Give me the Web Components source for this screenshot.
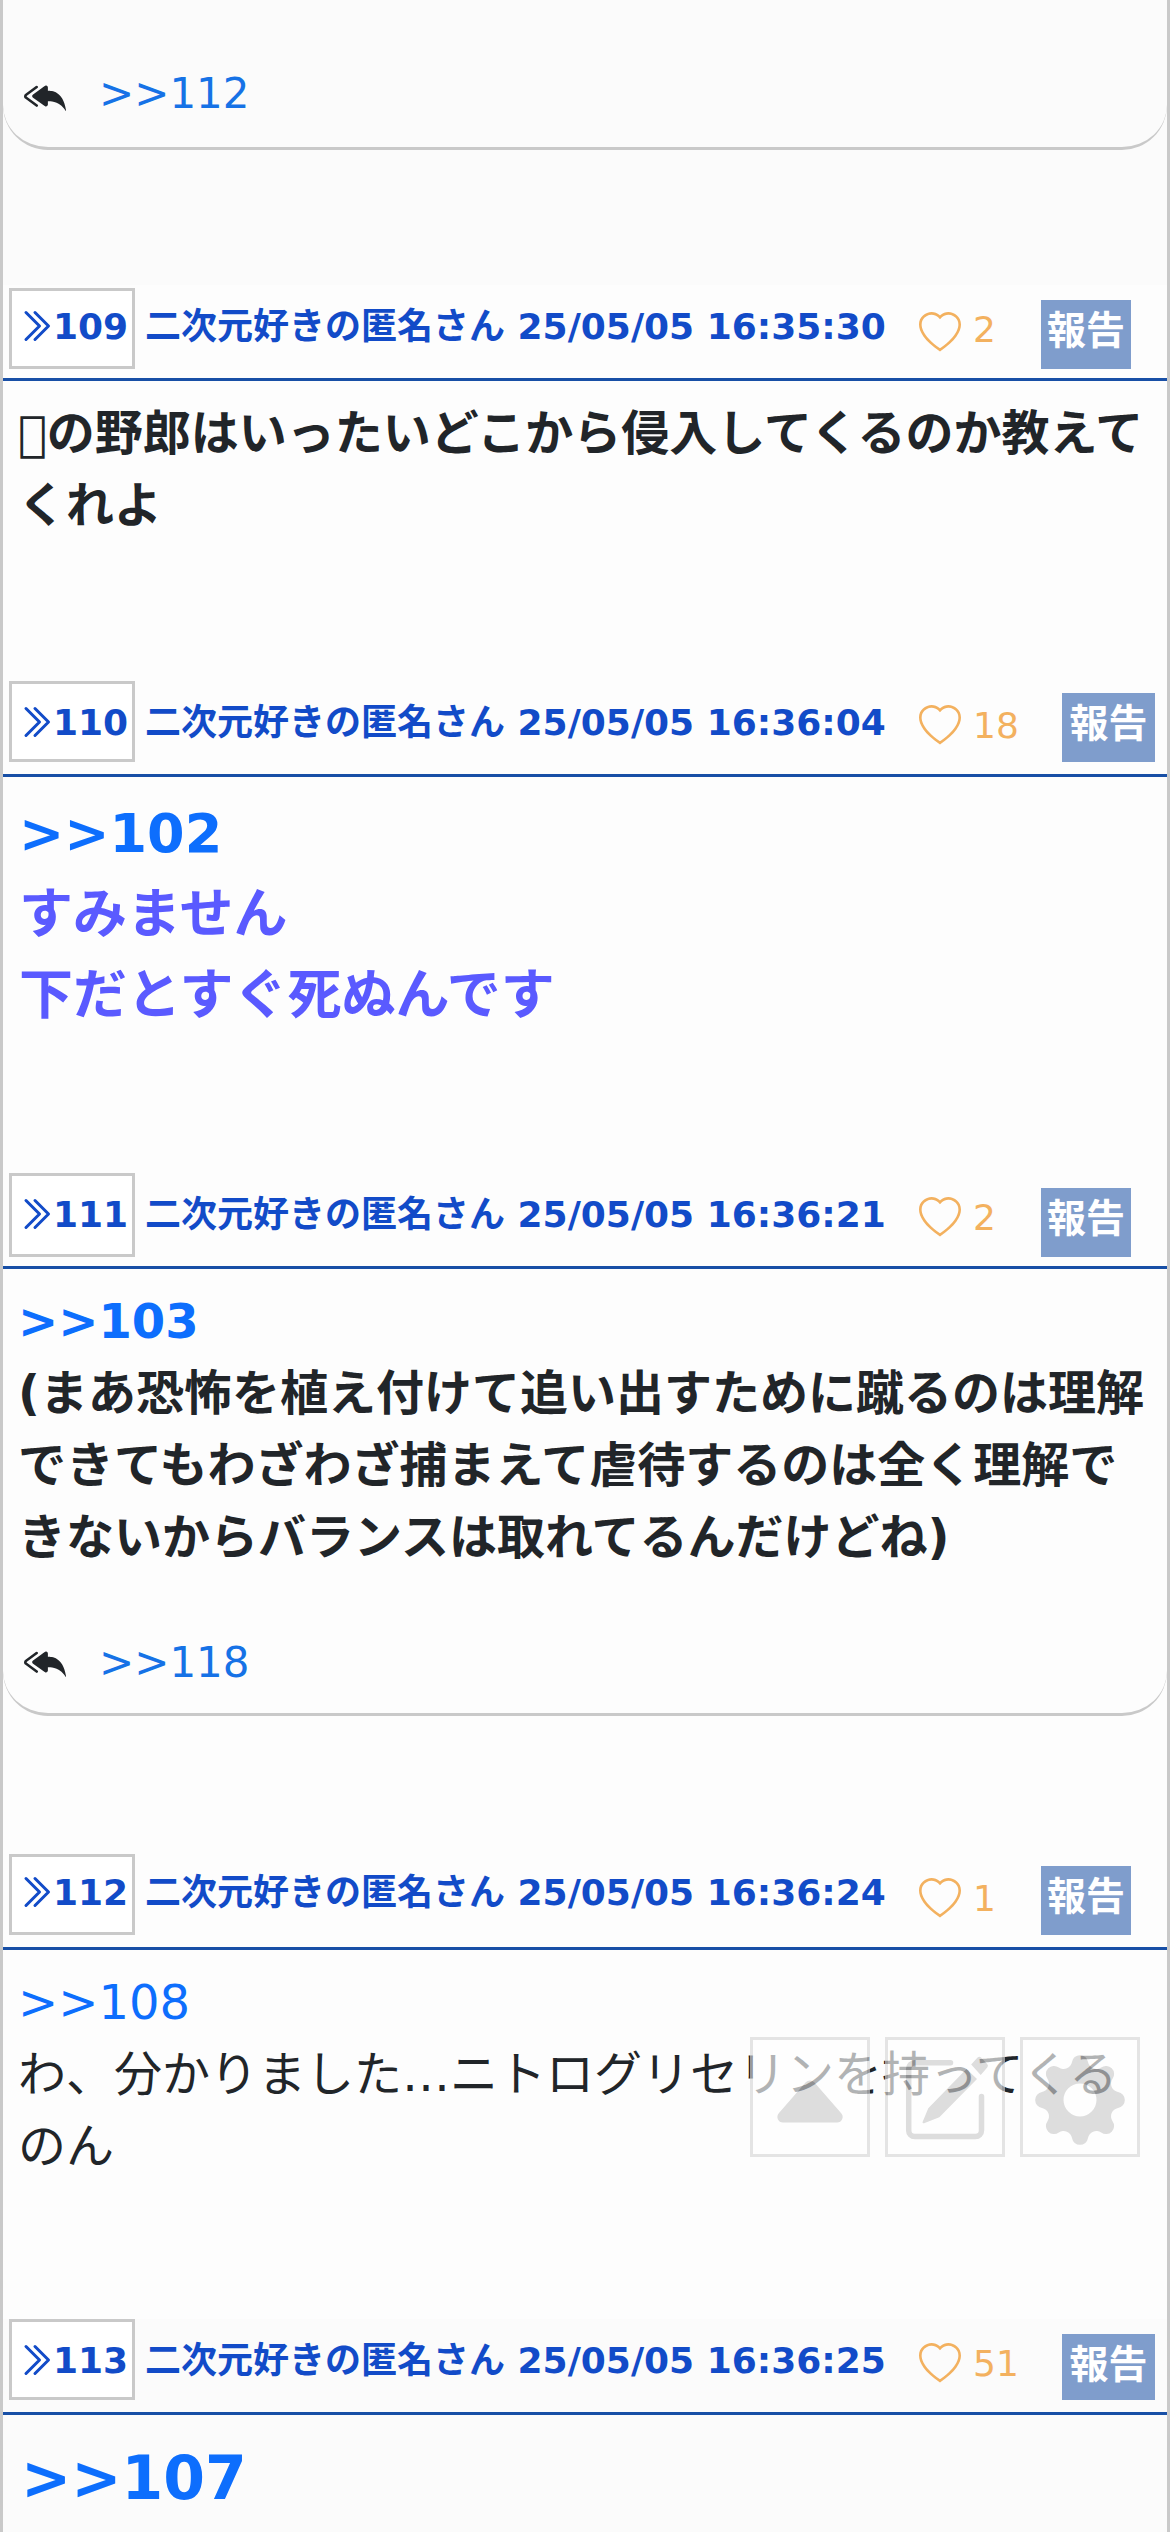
<!DOCTYPE html>
<html lang="ja">
<head>
<meta charset="utf-8">
<title>スレッド</title>
<style>
html,body{margin:0;padding:0}
body{width:1170px;height:2532px;overflow:hidden;background:#fdfdfd;color:#212529;font-family:"DejaVu Sans","Noto Sans CJK JP",sans-serif;font-size:48px;line-height:72px}
</style>
</head>
<body>
<board-thread>
  <thread-post style="--bg:#fbfbfb;--h:285px" replies="112" headless></thread-post>
  <thread-post no="109" time="25/05/05 16:35:30" likes="2" style="--h:396px;--box-y:3px;--heart-y:27px;--pad:16px"><div>&#x10F123;の野郎はいったいどこから侵入してくるのか教えてくれよ</div></thread-post>
  <thread-post no="110" time="25/05/05 16:36:04" likes="18" wide style="--h:492px;--report-y:12px;--lh:81px;--size:54px;--color:#5a5aff;--pad:16px;--x:16px"><post-anchor>102</post-anchor><div>すみません<br>下だとすぐ死ぬんです</div></thread-post>
  <thread-post no="111" time="25/05/05 16:36:21" likes="2" replies="118" style="--h:681px;--box-h:84px;--pad:16px;--reply-y:3px"><post-anchor>103</post-anchor><div>(まあ恐怖を植え付けて追い出すために蹴るのは理解できてもわざわざ捕まえて虐待するのは全く理解できないからバランスは取れてるんだけどね)</div></thread-post>
  <thread-post no="112" time="25/05/05 16:36:24" likes="1" style="--h:465px;--report-y:12px;--text-y:18px;--weight:400;--pad:16px"><post-anchor>108</post-anchor><div>わ、分かりました…ニトログリセリンを持ってくるのん</div></thread-post>
  <thread-post no="113" time="25/05/05 16:36:25" likes="51" wide style="--bg:#fbfbfb;--h:213px;--report-h:66px;--lh:90px;--size:60px;--pad:18px;--x:18px"><post-anchor>107</post-anchor></thread-post>
</board-thread>
<float-tools></float-tools>

<script>
class BoardThread extends HTMLElement{
  constructor(){super();this.attachShadow({mode:'open'}).innerHTML=`
  <style>:host{display:flex;flex-direction:column;box-sizing:border-box;width:1170px;height:2532px;overflow:hidden;border:solid #c9c9c9;border-width:0 3px}</style><slot></slot>`}
}
class PostAnchor extends HTMLElement{
  constructor(){super();this.attachShadow({mode:'open'}).innerHTML=`
  <style>:host{display:block;color:#0d6efd}</style>&gt;&gt;<slot></slot>`}
}
class PostReplies extends HTMLElement{
  connectedCallback(){this.attachShadow({mode:'open'}).innerHTML=`
  <style>
  :host{display:flex;align-items:flex-start;box-sizing:border-box;height:150px;border-bottom:3px solid #c9c9c9;border-radius:0 0 45px 45px;padding-left:21px;font-size:42px;line-height:48px;font-weight:400;color:#1672e6}
  svg{width:42px;height:42px;margin-top:75px;color:#212529}
  span{margin:var(--reply-pad,70px) 0 0 33px}
  </style>
  <svg viewBox="0 0 16 16" fill="currentColor"><path d="M8.021 11.9 3.453 8.62a.719.719 0 0 1 0-1.238L8.021 4.1a.716.716 0 0 1 1.079.619V6c1.5 0 6 0 7 8-2.5-4.5-7-4-7-4v1.281c0 .56-.606.898-1.079.618z"/><path d="M5.232 4.293a.5.5 0 0 1-.106.7L1.114 7.945a.5.5 0 0 1-.042.028.147.147 0 0 0 0 .252.503.503 0 0 1 .042.028l4.012 2.954a.5.5 0 1 1-.593.805L.539 9.073a1.147 1.147 0 0 1 0-1.946l3.994-2.94a.5.5 0 0 1 .699.106z"/></svg>
  <span>&gt;&gt;${this.getAttribute('to')}</span>`}
}
class PostHeader extends HTMLElement{
  connectedCallback(){const a=n=>this.getAttribute(n);this.attachShadow({mode:'open'}).innerHTML=`
  <style>
  :host{display:flex;align-items:flex-start;height:93px;border-bottom:3px solid #184fa6;font-size:36px;line-height:42px;white-space:nowrap}
  .no,.name{color:#124bc8;font-weight:700}
  .no{box-sizing:border-box;display:flex;width:126px;height:var(--box-h,81px);margin:var(--box-y,0px) 0 0 6px;border:3px solid #c9c9c9;background:#fff;padding-left:5px}
  .no svg{width:36px;height:36px;flex:none;margin-top:calc(var(--text-y,21px) - var(--box-y,0px) - 1px)}
  .no span{margin-top:calc(var(--text-y,21px) - var(--box-y,0px) - 3px)}
  .name{width:774px;margin:var(--text-y,21px) 0 0 10px}
  .like{display:flex;width:122px;color:#f3b15f}
  .like svg{width:42px;height:42px;margin-top:var(--heart-y,24px)}
  .like span{margin:24px 0 0 12px}
  .report{box-sizing:border-box;width:90px;height:var(--report-h,69px);margin-top:var(--report-y,15px);background:#7f9dcc;color:#fff;font-size:39px;font-weight:700;line-height:62px;text-align:center}
  :host([wide]) .like{width:143px}
  :host([wide]) .report{width:93px}
  </style>
  <div class="no"><svg viewBox="0 0 16 16" fill="none" stroke="currentColor" stroke-width="1.35" stroke-linecap="round" stroke-linejoin="round"><path d="m4 2 6 6-6 6M8 2l6 6-6 6"/></svg><span>${a('no')}</span></div>
  <div class="name">二次元好きの匿名さん ${a('time')}</div>
  <div class="like"><svg viewBox="0 0 16 16" fill="currentColor"><path d="m8 2.748-.717-.737C5.6.281 2.514.878 1.4 3.053c-.523 1.023-.641 2.5.314 4.385.92 1.815 2.834 3.989 6.286 6.357 3.452-2.368 5.365-4.542 6.286-6.357.955-1.886.838-3.362.314-4.385C13.486.878 10.4.28 8.717 2.01zM8 15C-7.333 4.868 3.279-3.04 7.824 1.143q.09.083.176.171a3 3 0 0 1 .176-.17C12.72-3.042 23.333 4.867 8 15"/></svg><span>${a('likes')}</span></div>
  <div class="report">報告</div>`}
}
class ThreadPost extends HTMLElement{
  connectedCallback(){
    const a=n=>this.getAttribute(n)||'',r=a('replies'),headless=this.hasAttribute('headless');
    this.attachShadow({mode:'open'}).innerHTML=`
  <style>
  :host{display:flex;flex-direction:column;flex:none;height:var(--h);background:var(--bg,transparent)}
  .body{padding:var(--pad) 15px 0 var(--x,15px);font-size:var(--size,48px);line-height:var(--lh,72px);font-weight:var(--weight,700);color:var(--color,#212529)}
  .body.replied{box-sizing:border-box;height:300px}
  </style>
  ${headless?'':`<post-header no="${a('no')}" time="${a('time')}" likes="${a('likes')}" ${this.hasAttribute('wide')?'wide':''}></post-header><div class="body ${r?'replied':''}"><slot></slot></div>`}
  ${r?`<post-replies to="${r}" ${headless?'':'style="--reply-pad:73px;margin-top:-3px"'}></post-replies>`:''}`}
}
/* Gear outline: eight rounded teeth joined by concave arcs, centred on 45,45. */
function gear(){
  let d='';
  for(let i=0;i<8;i++){
    const t=i*Math.PI/4,c=Math.cos(t),s=Math.sin(t),p=(x,y)=>(45+x*c-y*s).toFixed(2)+' '+(45+x*s+y*c).toFixed(2);
    d+=(i?'A8.5 8.5 0 0 0 ':'M')+p(-8,-38)+'A8.1 8.1 0 0 1 '+p(8,-38);
  }
  return d+'A8.5 8.5 0 0 0 37 7Z M45 28.4a16.5 16.5 0 1 0 0 33a16.5 16.5 0 1 0 0-33Z';
}
class FloatTools extends HTMLElement{
  constructor(){super();this.attachShadow({mode:'open'}).innerHTML=`
  <style>
  :host{position:absolute;left:750px;top:2037px;display:flex;gap:15px;opacity:.65}
  div{box-sizing:border-box;width:120px;height:120px;border:3px solid #d8d8d8;background:#fff;padding:15px 12px;color:#ccc}
  svg{display:block;width:90px;height:90px}
  </style>
  <div><svg viewBox="0 0 16 16" fill="currentColor"><path d="m7.247 4.86-4.796 5.481c-.566.647-.106 1.659.753 1.659h9.592a1 1 0 0 0 .753-1.659l-4.796-5.48a1 1 0 0 0-1.506 0z"/></svg></div>
  <div><svg viewBox="0 0 90 90" fill="none" stroke="currentColor" stroke-width="5.5" stroke-linecap="round"><path d="M50.5 7.7H14.7a6 6 0 0 0-6 6V75.500a6 6 0 0 0 6 6H75.500a6 6 0 0 0 6-6V41.500"/><path fill="currentColor" stroke="none" d="M66.500 14 77 24 39.300 62.300 24 68.200q-2 .5-1.300-1.500L28.300 53.300ZM71.200 9.500 77.600 2.600q1.700-1.700 3.400 0L87.200 9q1.500 1.700 0 3.400L80.700 20Z"/></svg></div>
  <div><svg viewBox="0 0 90 90" fill="currentColor" fill-rule="evenodd"><path d="${gear()}"/></svg></div>`}
}
customElements.define('board-thread',BoardThread);
customElements.define('post-anchor',PostAnchor);
customElements.define('post-replies',PostReplies);
customElements.define('post-header',PostHeader);
customElements.define('thread-post',ThreadPost);
customElements.define('float-tools',FloatTools);
</script>
</body>
</html>
